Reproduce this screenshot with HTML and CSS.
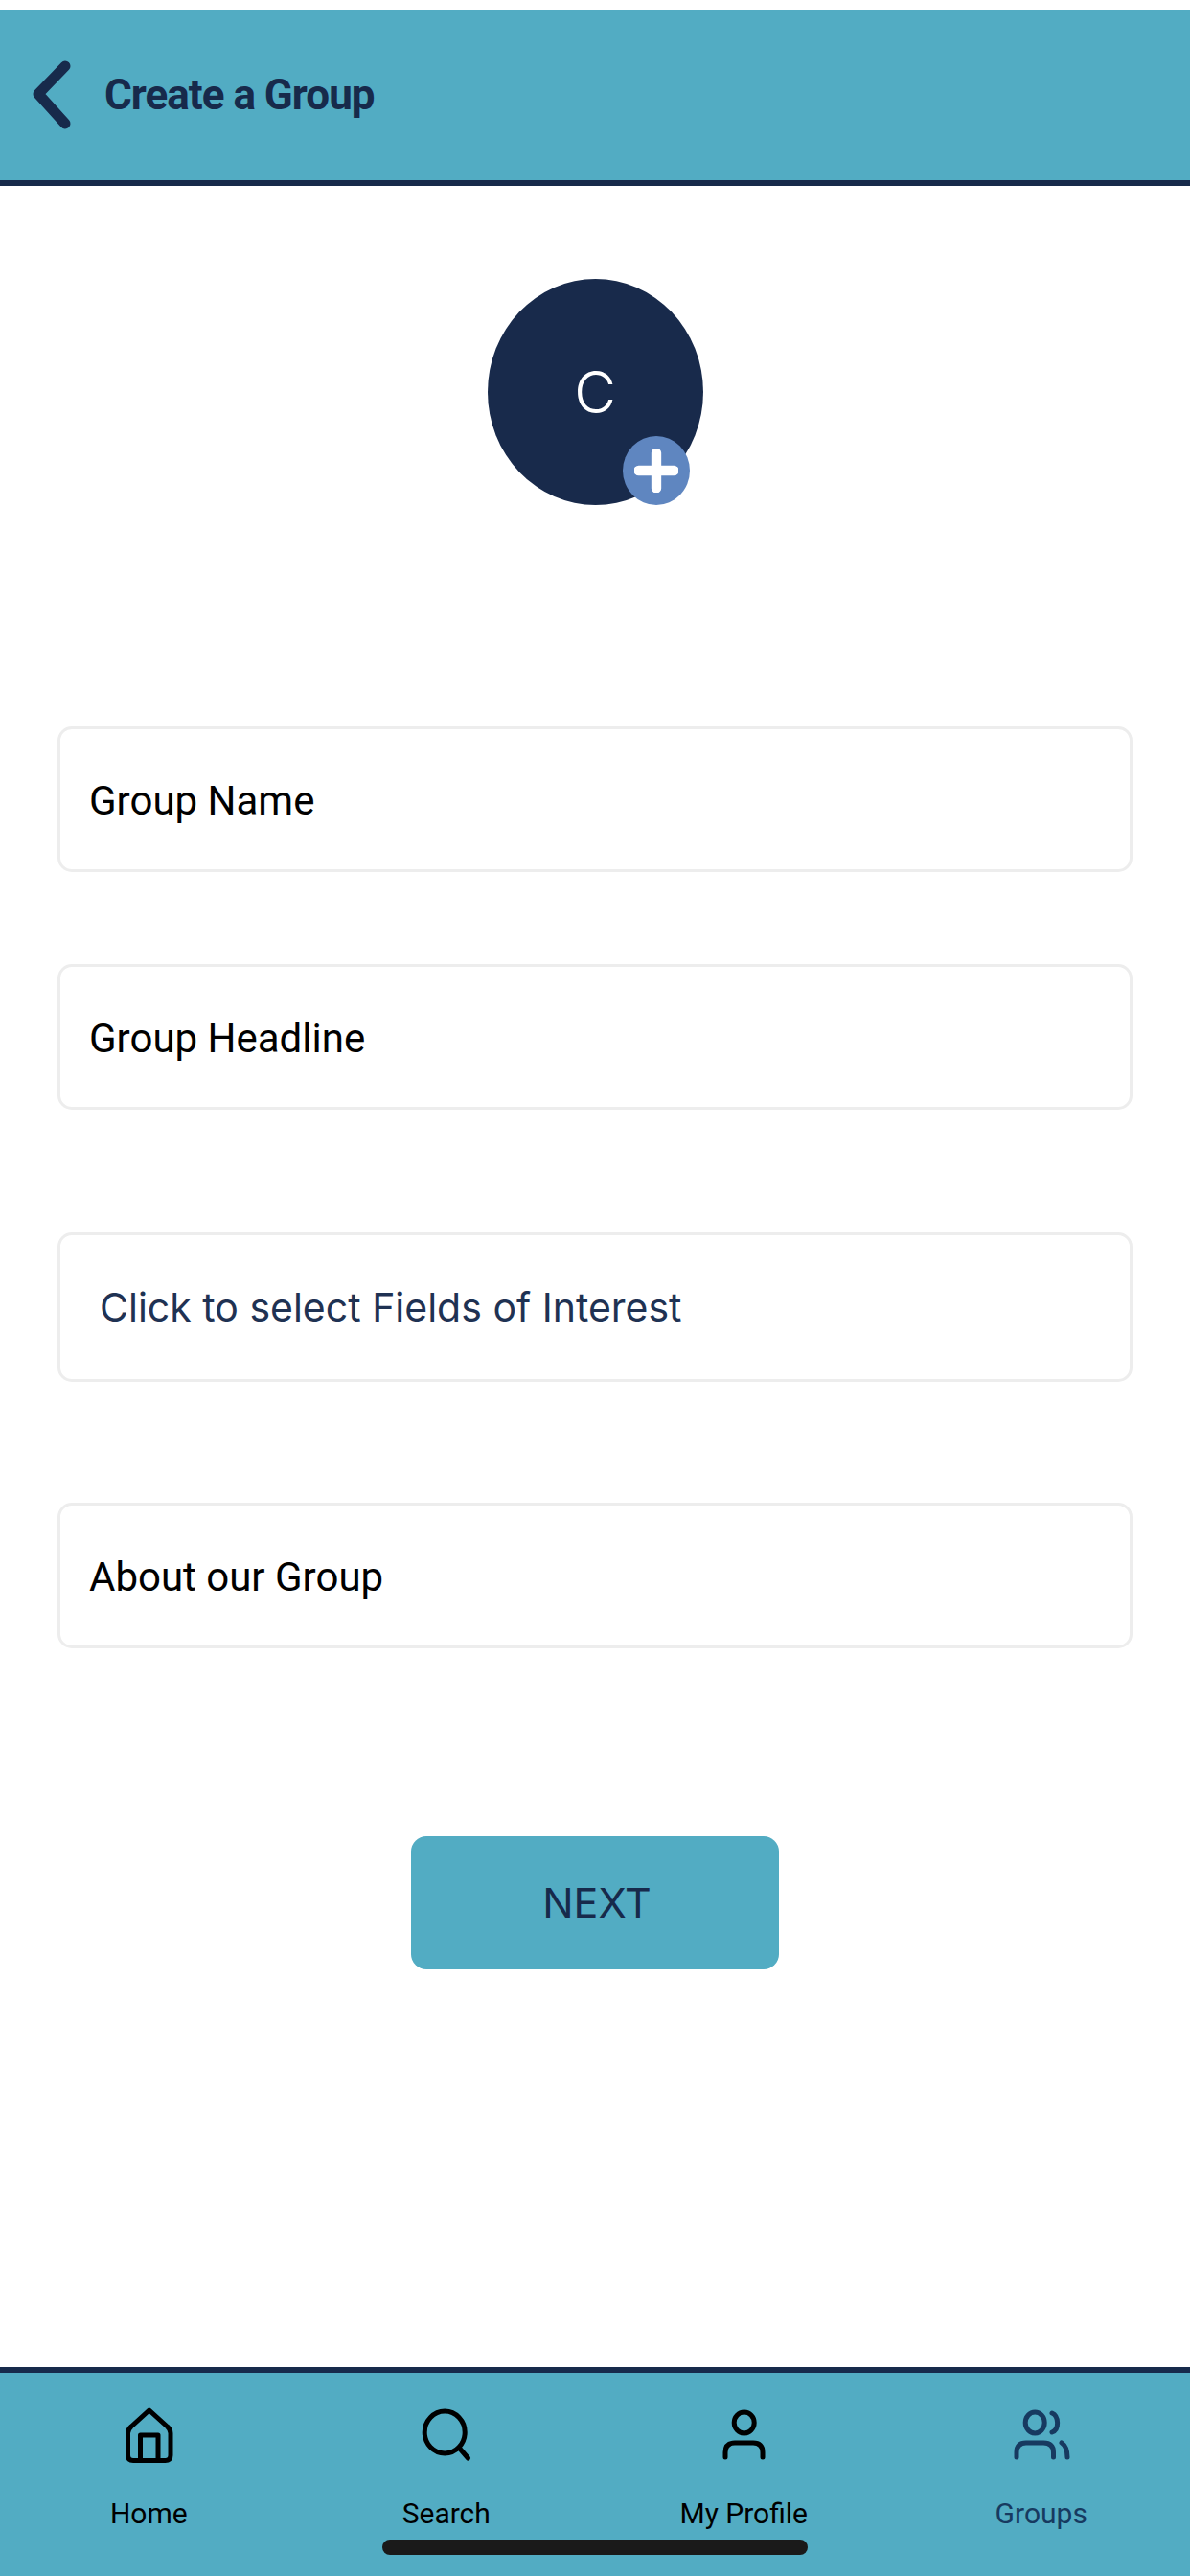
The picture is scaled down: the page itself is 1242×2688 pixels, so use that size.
FILE: index.html
```html
<!DOCTYPE html>
<html lang="en">
<head>
<meta charset="utf-8">
<title>Create a Group</title>
<link rel="stylesheet" href="styles.css">
</head>
<body>
<div class="screen">
  <header class="topbar">
    <svg class="back" viewBox="0 0 50 80" aria-hidden="true"><path d="M38 10 L10 39 L38 70"/></svg>
    <h1 class="title">Create a Group</h1>
  </header>
  <main class="content">
    <div class="avatar">
      <span class="avatar-letter">C</span>
      <div class="badge">
        <svg viewBox="0 0 40 40" aria-hidden="true"><path d="M20 4 V36 M4 20 H36"/></svg>
      </div>
    </div>
    <div class="field field-name">Group Name</div>
    <div class="field field-headline">Group Headline</div>
    <div class="field field-interest">Click to select Fields of Interest</div>
    <div class="field field-about">About our Group</div>
    <button class="next">NEXT</button>
  </main>
  <nav class="tabbar">
    <div class="tab">
      <svg class="tab-icon" viewBox="0 0 70 58" aria-hidden="true">
        <path d="M35.7 3 L54.5 20 Q58 23 58 27 V50 Q58 55.5 52.5 55.5 H19 Q13.5 55.5 13.5 50 V27 Q13.5 23 17 20 Z"/>
        <path d="M26.5 55 V29 H45 V55"/>
      </svg>
      <span class="tab-label">Home</span>
    </div>
    <div class="tab">
      <svg class="tab-icon" viewBox="0 0 70 58" aria-hidden="true">
        <ellipse cx="33.2" cy="26" rx="21" ry="22"/>
        <path d="M48 42 L57.5 53"/>
      </svg>
      <span class="tab-label">Search</span>
    </div>
    <div class="tab">
      <svg class="tab-icon" viewBox="0 0 70 58" aria-hidden="true">
        <ellipse cx="35.7" cy="16" rx="10.5" ry="11"/>
        <path d="M16 52 V47 Q16 37 26 37 H45 Q55 37 55 47 V52"/>
      </svg>
      <span class="tab-label">My Profile</span>
    </div>
    <div class="tab tab-active">
      <svg class="tab-icon" viewBox="0 0 70 58" aria-hidden="true">
        <ellipse cx="28.2" cy="16" rx="10" ry="11"/>
        <path d="M46 6 C53 9 54 23 46 26"/>
        <path d="M9 52 V47 Q9 37 19 37 H37 Q47.5 37 47.5 47 V52"/>
        <path d="M56 37 Q62 41 62 52"/>
      </svg>
      <span class="tab-label">Groups</span>
    </div>
    <div class="home-indicator"></div>
  </nav>
</div>
</body>
</html>
```
FILE: styles.css
```css
* { box-sizing: border-box; }
html, body { margin: 0; padding: 0; background: #fff; }
.screen {
  width: 1242px;
  height: 2688px;
  display: flex;
  flex-direction: column;
  padding-top: 10px;
  font-family: Roboto, "Liberation Sans", sans-serif;
}
.topbar {
  height: 184px;
  flex: none;
  background: #52acc3;
  border-bottom: 6px solid #172a4b;
  display: flex;
  align-items: center;
  padding-left: 30px;
  gap: 29px;
}
.back { width: 50px; height: 80px; flex: none; }
.back path { fill: none; stroke: #172a4b; stroke-width: 11; stroke-linecap: round; stroke-linejoin: round; }
.title {
  margin: 0;
  font-size: 44px;
  font-weight: 700;
  color: #172a4b;
  line-height: 1;
  letter-spacing: -1px;
}
.content {
  flex: 1;
  display: flex;
  flex-direction: column;
  align-items: center;
  padding-top: 97px;
}
.avatar {
  position: relative;
  width: 225px;
  height: 236px;
  border-radius: 50%;
  background: #182a4b;
  display: flex;
  align-items: center;
  justify-content: center;
  color: #fff;
  flex: none;
}
.avatar-letter { font-family: Inter, Roboto, sans-serif; font-size: 60px; font-weight: 350; }
.badge {
  position: absolute;
  left: 141px;
  top: 164px;
  width: 70px;
  height: 72px;
  border-radius: 50%;
  background: #5f86c0;
  display: flex;
  align-items: center;
  justify-content: center;
}
.badge svg { width: 46px; height: 46px; }
.badge path { fill: none; stroke: #fff; stroke-width: 9; stroke-linecap: round; }
.field {
  width: 1122px;
  height: 152px;
  flex: none;
  border: 3px solid #ededed;
  border-radius: 15px;
  display: flex;
  align-items: center;
  padding-left: 30px;
  padding-top: 2px;
  font-size: 42px;
  color: #000;
}
.field-name { margin-top: 231px; }
.field-headline { margin-top: 96px; }
.field-interest {
  margin-top: 128px;
  height: 156px;
  padding-left: 41px;
  padding-top: 0;
  font-family: Inter, Roboto, sans-serif;
  font-size: 41px;
  color: #1f3253;
}
.field-about { margin-top: 126px; }
.next {
  margin-top: 196px;
  width: 384px;
  height: 139px;
  flex: none;
  border: 0;
  border-radius: 16px;
  background: #52acc3;
  color: #172a4b;
  font-family: Inter, Roboto, sans-serif;
  font-size: 43px;
  padding: 0 0 2px 4px;
}
.tabbar {
  position: relative;
  height: 218px;
  flex: none;
  background: #52acc3;
  border-top: 6px solid #172a4b;
  display: grid;
  grid-template-columns: repeat(4, 1fr);
  padding-top: 36px;
}
.tab {
  display: flex;
  flex-direction: column;
  align-items: center;
  color: #000;
}
.tab-icon { width: 70px; height: 58px; flex: none; }
.tab-icon path, .tab-icon ellipse {
  fill: none;
  stroke: #000;
  stroke-width: 5;
  stroke-linecap: round;
  stroke-linejoin: round;
}
.tab-label { margin-top: 33px; font-size: 30px; line-height: 40px; }
.tab-active { color: #173a60; }
.tab-active .tab-icon path, .tab-active .tab-icon ellipse { stroke: #173a60; }
.home-indicator {
  position: absolute;
  left: 399px;
  top: 174px;
  width: 444px;
  height: 16px;
  border-radius: 8px;
  background: #1a1a1a;
}
```
